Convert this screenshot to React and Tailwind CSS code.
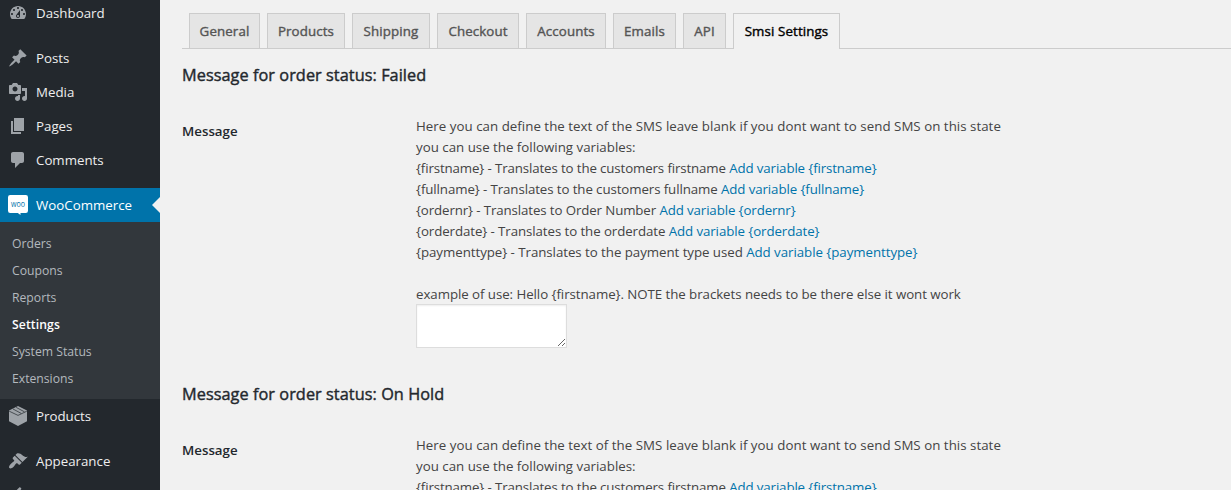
import React from "react";

const DASHBOARD =
  "M3.76 16h12.48c1.1-1.37 1.76-3.11 1.76-5 0-4.42-3.58-8-8-8s-8 3.58-8 8c0 1.89.66 3.63 1.76 5zM10 4c.55 0 1 .45 1 1s-.45 1-1 1-1-.45-1-1 .45-1 1-1zM6 6c.55 0 1 .45 1 1s-.45 1-1 1-1-.45-1-1 .45-1 1-1zm8 0c.55 0 1 .45 1 1s-.45 1-1 1-1-.45-1-1 .45-1 1-1zm-5.37 5.55L12 7v6c0 1.1-.9 2-2 2s-2-.9-2-2c0-.57.24-1.08.63-1.45zM4 10c.55 0 1 .45 1 1s-.45 1-1 1-1-.45-1-1 .45-1 1-1zm12 0c.55 0 1 .45 1 1s-.45 1-1 1-1-.45-1-1 .45-1 1-1zm-5 3c0-.55-.45-1-1-1s-1 .45-1 1 .45 1 1 1 1-.45 1-1z";
const PIN =
  "M10.44 3.02l1.82-1.82 6.36 6.35-1.83 1.82c-1.05-.68-2.48-.57-3.41.36l-.75.75c-.92.93-1.04 2.35-.35 3.41l-1.83 1.82-2.41-2.41-2.8 2.79c-.42.42-3.38 2.71-3.8 2.29s1.86-3.39 2.28-3.81l2.79-2.79L4.1 9.36l1.83-1.82c1.05.69 2.48.57 3.4-.36l.75-.75c.93-.92 1.05-2.35.36-3.41z";
const MEDIA =
  "M13 11V4c0-.55-.45-1-1-1h-1.67L9 1H5L3.67 3H2c-.55 0-1 .45-1 1v7c0 .55.45 1 1 1h10c.55 0 1-.45 1-1zM7 4.5c1.38 0 2.5 1.12 2.5 2.5S8.38 9.5 7 9.5 4.5 8.38 4.5 7 5.62 4.5 7 4.5zM14 6h5v10.5c0 1.38-1.12 2.5-2.5 2.5S14 17.88 14 16.5s1.12-2.5 2.5-2.5c.17 0 .34.02.5.05V9h-3V6zm-4 8.05V13h2v3.5c0 1.38-1.12 2.5-2.5 2.5S7 17.88 7 16.5 8.12 14 9.5 14c.17 0 .34.02.5.05z";
const PAGES = "M6 15V2h10v13H6zm-1 1h8v2H3V5h2v11z";
const COMMENT =
  "M5 2h9c1.1 0 2 .9 2 2v7c0 1.1-.9 2-2 2h-2l-5 5v-5H5c-1.1 0-2-.9-2-2V4c0-1.1.9-2 2-2z";
const BRUSH =
  "M14.48 11.06L7.41 3.99l1.5-1.5c.5-.56 2.3-.47 3.51.32 1.21.8 1.43 1.28 2.91 2.1 1.18.64 2.45 1.26 4.45.85zm-.71.71L6.7 4.7 4.93 6.47c-.39.39-.39 1.02 0 1.41l1.06 1.06c.39.39.39 1.03 0 1.42-.6.6-1.43 1.11-2.21 1.69-.35.26-.7.53-1.01.84C1.43 14.23.4 16.08 1.4 17.07c.99 1 2.84-.03 4.18-1.36.31-.31.58-.66.85-1.02.57-.78 1.08-1.61 1.69-2.21.39-.39 1.02-.39 1.41 0l1.06 1.06c.39.39 1.02.39 1.41 0z";
const PLUG =
  "M13.11 4.36L9.87 7.6 8 5.73l3.24-3.24c.35-.34 1.05-.2 1.56.32.52.51.66 1.21.31 1.55zm-8 1.77l.91-1.12 9.01 9.01-1.19.84c-.71.71-2.63 1.16-3.82 1.16H6.14L4.9 17.26c-.59.59-1.54.59-2.12 0-.59-.58-.59-1.53 0-2.12l1.24-1.24v-3.88c0-1.13.4-3.19 1.09-3.89zm7.26 3.97l3.24-3.24c.34-.35 1.04-.21 1.55.31.52.51.66 1.21.31 1.55l-3.24 3.25z";

function Glyph({ d }) {
  return (
    <svg viewBox="0 0 20 20" className="size-5 shrink-0 fill-[#9ea3a8]">
      <path d={d} />
    </svg>
  );
}

function BoxIcon() {
  return (
    <svg viewBox="0 0 20 20" className="size-5 shrink-0">
      <path d="M10 0l9 4.600v10.600L10 20l-9-4.800V4.600z" fill="#9ea3a8" />
      <path
        d="M1.200 5.200L10 9.400l8.800-4.200M5 3l8.200 4.400M8.200 1.400l8.200 4.400"
        fill="none"
        stroke="#23282d"
        strokeWidth="0.7"
      />
    </svg>
  );
}

function WooIcon() {
  return (
    <svg viewBox="0 0 20 20" className="size-5 shrink-0">
      <path
        d="M2.200 0h15.600A2.200 2.200 0 0 1 20 2.200v13.600a2.200 2.200 0 0 1-2.200 2.200h-5.300v2L9.800 18H2.200A2.200 2.200 0 0 1 0 15.800V2.200A2.200 2.200 0 0 1 2.200 0z"
        fill="#fff"
      />
      <text
        x="10"
        y="11.8"
        textAnchor="middle"
        textLength="14"
        lengthAdjust="spacingAndGlyphs"
        fontFamily="Open Sans, sans-serif"
        fontSize="9.5"
        fill="#0073aa"
      >
        woo
      </text>
    </svg>
  );
}

function MenuItem({ icon, label, active }) {
  return (
    <a
      className={
        "relative flex h-[34px] shrink-0 items-center gap-2 pl-2 text-[13.3px] " +
        (active ? "bg-[#0073aa] text-white" : "text-[#eee]")
      }
    >
      {icon}
      <span className="pt-px">{label}</span>
      {active && (
        <span className="absolute top-[9px] right-0 border-y-8 border-r-8 border-y-transparent border-r-[#f1f1f1]" />
      )}
    </a>
  );
}

const submenu = [
  "Orders",
  "Coupons",
  "Reports",
  "Settings",
  "System Status",
  "Extensions",
];

function Sidebar() {
  return (
    <nav className="-mt-1 flex w-40 shrink-0 flex-col bg-[#23282d]">
      <MenuItem icon={<Glyph d={DASHBOARD} />} label="Dashboard" />
      <div className="h-[11px] shrink-0" />
      <MenuItem icon={<Glyph d={PIN} />} label="Posts" />
      <MenuItem icon={<Glyph d={MEDIA} />} label="Media" />
      <MenuItem icon={<Glyph d={PAGES} />} label="Pages" />
      <MenuItem icon={<Glyph d={COMMENT} />} label="Comments" />
      <div className="h-[11px] shrink-0" />
      <MenuItem icon={<WooIcon />} label="WooCommerce" active />
      <ul className="h-[177px] shrink-0 bg-[#32373c] pt-2 pl-3 text-[12.2px] leading-[27px] text-[#b4b9be]">
        {submenu.map((s) => (
          <li key={s} className={s === "Settings" ? "font-semibold tracking-[0.1px] text-white" : ""}>
            {s}
          </li>
        ))}
      </ul>
      <MenuItem icon={<BoxIcon />} label="Products" />
      <div className="h-[11px] shrink-0" />
      <MenuItem icon={<Glyph d={BRUSH} />} label="Appearance" />
      <MenuItem icon={<Glyph d={PLUG} />} />
    </nav>
  );
}

const tabs = [
  ["General", "w-[71px]"],
  ["Products", "w-[78px]"],
  ["Shipping", "w-[78px]"],
  ["Checkout", "w-[82px]"],
  ["Accounts", "w-[80px]"],
  ["Emails", "w-[63px]"],
  ["API", "w-[43px]"],
  ["Smsi Settings", "w-[107px]"],
];

function Tabs() {
  return (
    <div className="mt-[13px] flex h-9 gap-[7px] border-b border-[#ccc] pl-[7px] text-[13.3px] tracking-[0.12px] [-webkit-text-stroke:0.4px]">
      {tabs.map(([name, width]) => (
        <a
          key={name}
          className={
            "flex items-center justify-center border border-b-0 border-[#ccc] whitespace-nowrap " +
            width +
            (name === "Smsi Settings"
              ? " h-9 bg-[#f1f1f1] text-black"
              : " h-[35px] bg-[#e5e5e5] pt-px text-[#555]")
          }
        >
          {name}
        </a>
      ))}
    </div>
  );
}

const variables = [
  ["{firstname}", "the customers firstname", "tracking-[-0.13px]"],
  ["{fullname}", "the customers fullname", "tracking-[-0.1px]"],
  ["{ordernr}", "Order Number", "tracking-[-0.12px]"],
  ["{orderdate}", "the orderdate", "tracking-[-0.09px]"],
  ["{paymenttype}", "the payment type used", "tracking-[-0.05px]"],
];

function Section({ status }) {
  return (
    <section className="h-[319px] shrink-0">
      <h2 className="pt-[14px] text-[16.3px] leading-6 tracking-[0.05px] text-[#23282d] [-webkit-text-stroke:0.4px]">
        Message for order status: {status}
      </h2>
      <div className="flex pt-[29px] whitespace-nowrap">
        <div className="w-[234px] shrink-0 pt-[5px] text-[13.3px] leading-[21px] font-semibold text-[#23282d]">
          Message
        </div>
        <div className="text-[13.3px] leading-[21px] text-[#444]">
          <p className="tracking-[0.03px]">
            Here you can define the text of the SMS leave blank if you dont want
            to send SMS on this state
          </p>
          <p>you can use the following variables:</p>
          {variables.map(([v, meaning, tracking]) => (
            <p key={v} className={tracking}>
              {v} - Translates to {meaning}{" "}
              <a className="text-[#0073aa]">Add variable {v}</a>
            </p>
          ))}
          <p className="pt-[21px] tracking-[-0.06px]">
            example of use: Hello {"{firstname}"}. NOTE the brackets needs to be
            there else it wont work
          </p>
          <textarea className="-mt-px block h-11 w-[151px] resize border border-[#ddd] bg-white shadow-[inset_0_1px_2px_rgba(0,0,0,0.07)]" />
        </div>
      </div>
    </section>
  );
}

export default function App() {
  return (
    <div className="flex h-[490px] w-[1231px] overflow-hidden bg-[#f1f1f1] font-['Open_Sans','Noto_Sans',sans-serif]">
      <Sidebar />
      <main className="flex min-w-0 flex-1 flex-col pl-[22px]">
        <Tabs />
        <Section status="Failed" />
        <Section status="On Hold" />
      </main>
    </div>
  );
}
